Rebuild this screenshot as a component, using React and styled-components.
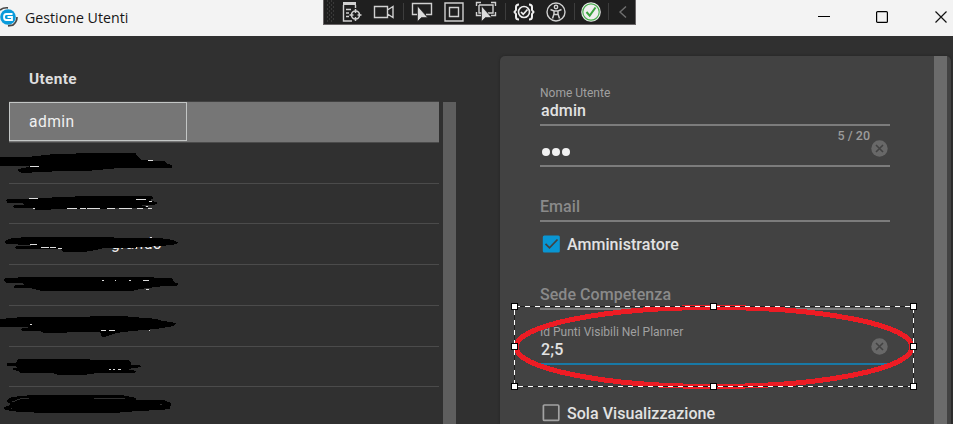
import React from 'react';
import styled, { createGlobalStyle } from 'styled-components';

const GlobalStyle = createGlobalStyle`
  * { box-sizing: border-box; }
  body { margin: 0; overflow: hidden; background: #303030; }
  svg { display: block; flex: none; }
`;

const Window = styled.div`
  position: relative;
  width: 953px;
  height: 424px;
  overflow: hidden;
  display: flex;
  flex-direction: column;
  background: #303030;
  font-family: Roboto, "Liberation Sans", sans-serif;
`;

const TitleBar = styled.header`
  flex: none;
  height: 36px;
  display: flex;
  align-items: flex-start;
  justify-content: space-between;
  background: #f3f3f3;
`;

const Brand = styled.div`
  width: 323px;
  height: 34px;
  display: flex;
  align-items: center;
  gap: 7px;
`;

const Title = styled.h1`
  margin: 2px 0 0;
  font: 400 14.2px/20px "Open Sans", "Noto Sans", sans-serif;
  color: #161616;
`;

const DebugBar = styled.div`
  width: 313px;
  height: 25px;
  display: flex;
  background: #1f1f1f;
  border: solid #686466;
  border-width: 0 1px 1px;
`;

const Cell = styled.div`
  width: ${(p) => p.$w || 32}px;
  height: 24px;
  display: flex;
  align-items: center;
  justify-content: center;
`;

const Divider = styled.div`
  width: 1px;
  height: 17px;
  margin: 3px 2px 0 3px;
  background: #3d3d3d;
`;

const Controls = styled.div`
  width: 317px;
  height: 34px;
  padding-right: 6px;
  display: flex;
  align-items: center;
  justify-content: flex-end;
  gap: 46px;
`;

const MaximizeIcon = styled.svg`
  margin-right: 1px;
`;

const Body = styled.main`
  flex: 1;
  min-height: 0;
  display: flex;
`;

const UserList = styled.section`
  width: 430px;
  margin-left: 9px;
`;

const ListHeader = styled.div`
  height: 66px;
  padding: 33px 20px 0;
  border-bottom: 1px solid #414141;
  font-size: 15.4px;
  line-height: 20px;
  letter-spacing: 0.35px;
  font-weight: 700;
  color: #dedede;
`;

const UserRow = styled.div`
  height: 40.75px;
  border-bottom: 1px solid #4b4b4b;
  background: ${(p) => (p.$selected ? '#767676' : 'transparent')};
`;

const UserCell = styled.div`
  width: 178px;
  height: 39px;
  padding-left: ${(p) => p.$indent || 20}px;
  line-height: 40px;
  font-size: 15.6px;
  letter-spacing: 0.45px;
  color: #f0f0f0;
  border: ${(p) => (p.$selected ? '1px solid #c3c6c5' : '0')};
  ${(p) => p.$selected && 'padding-left: 19px; line-height: 39px;'}
`;

const ScrollThumb = styled.div`
  width: 13px;
  margin: ${(p) => p.$margin};
  background: ${(p) => p.$color};
`;

const Card = styled.section`
  width: 451px;
  margin: 20px 0 0 44px;
  display: flex;
  justify-content: space-between;
  background: #424242;
  border-radius: 5px 5px 0 0;
  box-shadow: 0 0 3px #222;
`;

const Form = styled.form`
  width: 350px;
  margin-left: 40px;
  padding-top: 29px;
`;

const Field = styled.div`
  height: ${(p) => p.$h}px;
  display: flex;
  flex-direction: column;
  justify-content: flex-end;
  border-bottom: 2px solid ${(p) => p.$line || '#7c7c7c'};
`;

const Label = styled.label`
  font-size: 12px;
  line-height: 16px;
  font-weight: 400;
  color: #a0a0a0;
`;

const FieldRow = styled.div`
  height: ${(p) => p.$h || 22}px;
  display: flex;
  align-items: flex-start;
  justify-content: space-between;
`;

const Value = styled.span`
  padding-left: 1px;
  font-size: 16px;
  line-height: 20px;
  font-weight: 500;
  letter-spacing: 0.1px;
  color: #e3e3e3;
`;

const Placeholder = styled.span`
  font-size: 16px;
  line-height: 20px;
  font-weight: 500;
  letter-spacing: 0.05px;
  color: #8a8a8a;
  padding-bottom: 3px;
`;

const PasswordDots = styled.svg`
  margin-top: 8px;
`;

const Adornment = styled.div`
  display: flex;
  gap: 1px;
  margin-right: 2px;
`;

const Counter = styled.span`
  margin-top: 1px;
  font-size: 12.5px;
  line-height: 16px;
  font-weight: 500;
  color: #9c9c9c;
`;

const ClearIcon = styled.svg`
  margin-top: ${(p) => p.$drop}px;
`;

const Check = styled.label`
  display: flex;
  align-items: center;
  height: 20px;
  margin-top: ${(p) => p.$top}px;
  padding-left: 2px;
  gap: 6px;
  font-size: 16px;
  font-weight: 500;
  letter-spacing: 0.05px;
  color: #e2e2e2;
`;

const Annotations = styled.svg`
  position: absolute;
  inset: 0;
  pointer-events: none;
`;

const Logo = () => (
  <svg width="18" height="24" viewBox="0 0 18 24">
    <circle cx="8" cy="12" r="7.8" fill="#0a9bdb" />
    <path d="M0 5.2Q3 2.3 8 2.8M17 12Q17 17 12.7 20.2L8 20.8" fill="none" stroke="#484848" strokeWidth="1.7" />
    <path d="M12.5 9H6.3Q4 9 4 12T6.3 15H12V12H7.5" fill="none" stroke="#fff" strokeWidth="1.8" />
  </svg>
);

const Svg = ({ children, w = 22 }) => (
  <svg width={w} height="24" viewBox={`0 0 ${w} 24`} fill="none" stroke="#d0d0d0" strokeWidth="1.4">{children}</svg>
);

const Arrow = () => <path d="M6.5 6V21.5L10.4 17.6H16.6Z" fill="#dcdcdc" stroke="#1f1f1f" strokeWidth=".6" />;

const Grip = () => (
  <Svg w={8}>
    {[1, 3, 5, 7, 9, 11, 13, 15, 17, 19, 21].map((y, i) => (
      <path key={y} d={i % 2 ? `M3 ${y}h1M7 ${y}h1` : `M1 ${y}h1M5 ${y}h1`} stroke="#555" strokeWidth="1" />
    ))}
  </Svg>
);

const Clear = ({ drop }) => (
  <ClearIcon $drop={drop} width="17" height="17" viewBox="0 0 17 17">
    <circle cx="8.5" cy="8.5" r="8.2" fill="#686868" />
    <path d="M5 5L12 12M12 5L5 12" stroke="#424242" strokeWidth="1.6" />
  </ClearIcon>
);

const Box = ({ checked }) => (
  <svg width="19" height="19" viewBox="0 0 19 19">
    {checked ? (
      <>
        <rect x=".8" y=".5" width="17" height="17" rx="1.5" fill="#0996d3" />
        <path d="M3.5 8.8L7.5 12.8L15.5 4.5" fill="none" stroke="#424242" strokeWidth="1.8" />
      </>
    ) : (
      <rect x="1.4" y="1" width="15.4" height="15.4" rx="1" fill="none" stroke="#a3a3a3" strokeWidth="1.7" />
    )}
  </svg>
);

const scribbles = [
  'M0 157H28L54 154L98 153V153H136L137 156L142 160L164 161L168 164L172 165V168H120L86 171L62 171L22 173Q16 171 18 169L28 167L30 166H0Z',
  'M7 199L30 199L38 198L66 197L84 196H151L154 198L150 200L158 203L154 205H140L150 208L68 209H52L50 210H36L33 208H15Q11 206 15 205H24L23 203H8Q5 201 7 199Z',
  'M5 241L12 238L30 237H110L118 238H160L173 240L179 243L172 245L160 246L128 248H104L96 250L84 252H63L61 249H17Q13 247 17 246H32L29 245L6 244Z',
  'M5 278L30 277H154V278H172L174 282L179 284L176 286H164L140 289L132 291H42L30 288H15Q12 286 16 285H25L22 283H7Q2 281 5 278Z',
  'M0 319L22 317H82L97 316H124L132 317L158 319V320L176 323L174 326L156 329L132 331L116 333L104 337Q99 336 101 334L100 332H74L60 333H44L40 331H24Q19 330 23 328H28L27 327H0Z',
  'M7 363H16L18 359H90V360H128L131 363V365L140 365L141 367L127 369L136 371L134 373H97L83 375H58L52 373H20L18 371L13 370V368H18L15 366H7Z',
  'M8 399L12 397L32 395H122L136 398V400H164L171 403L170 409L160 410L138 411L114 413H48L20 412L5 410Q2 407 8 406L11 404L7 402Z',
];

const specks = 'M30 166.5h9M148 160.5h5M29 198.5h9M136 199.5h10M149 201.5h3M33 208.5h2M67 208.5h10M80 208.5h6M87 208.5h13M107 208.5h8M119 208.5h13M137 208.5h6M146 206.5h2M148 208.5h4M30 244.5h7M41 247.5h8M50 247.5h6M58 248.5h4M150 237.5h2M102 280.5h2M115 280.5h1M129 280.5h2M143 280.5h6M146 289.5h3M30 324.5h2M101 330.5h5M109 330.5h6M149 330.5h1M109 369h2M113 369h2M118 369h3';

const handles = [[514, 307], [714, 307], [914, 307], [514, 347], [914, 347], [514, 387], [714, 387], [914, 387]];

const rows = ['', '', 'grando', '', '', '', ''];

export default function App() {
  return (
    <Window>
      <GlobalStyle />
      <TitleBar>
        <Brand><Logo /><Title>Gestione Utenti</Title></Brand>
        <DebugBar>
          <Cell $w={12}><Grip /></Cell>
          <Cell>
            <Svg>
              <path d="M2 3.5H15" strokeWidth="3" />
              <path d="M2.5 5V21H11M14.5 5V8M5 9.5H10M5 13H8M5 16.5H8" />
              <circle cx="14.5" cy="15" r="4" strokeWidth="1.6" />
              <path d="M14.5 9v4M14.5 17v4M8.5 15h4M16.5 15h4" strokeWidth="1.5" />
            </Svg>
          </Cell>
          <Cell><Svg><path d="M1.5 6.5H14.5V17.5H1.5ZM14.5 10L20 6.5V17.5L14.5 14" /></Svg></Cell>
          <Divider />
          <Cell><Svg><path d="M6 14.5H1.5V3.5H20.5V14.5H15" /><Arrow /></Svg></Cell>
          <Cell><Svg><path d="M2 3H20V21H2ZM6.5 7.5H15.5V16.5H6.5Z" /></Svg></Cell>
          <Cell><Svg><path d="M1.5 6V2.5H6M16 2.5H20.5V6M20.5 12V15.5H16M1.5 12V15.5H6M4 5H18V13H13M4 5V13H7" /><Arrow /></Svg></Cell>
          <Divider />
          <Cell>
            <Svg>
              <path d="M6 4.5Q3 4.5 3 7V10L1.5 12L3 14V17Q3 19.5 6 19.5M16 4.5Q19 4.5 19 7V10L20.5 12L19 14V17Q19 19.5 16 19.5" strokeWidth="2" stroke="#eee" />
              <circle cx="11" cy="12" r="5.5" stroke="#eee" strokeWidth="1.6" />
              <path d="M8 12L10.2 14.2L14.5 9.5" stroke="#eee" strokeWidth="1.7" />
            </Svg>
          </Cell>
          <Cell $w={31}>
            <Svg>
              <circle cx="11" cy="12" r="9" />
              <circle cx="11" cy="7" r="1.7" />
              <path d="M5.5 9.5L9 11H13L16.5 9.5M9 11V14L7.5 18.5M13 11V14L14.5 18.5M9.5 14.5H12.5" strokeWidth="1.5" />
            </Svg>
          </Cell>
          <Divider />
          <Cell $w={28}>
            <Svg>
              <circle cx="11" cy="12" r="9.8" fill="#eee" stroke="none" />
              <circle cx="11" cy="12" r="8.2" stroke="#4bae50" strokeWidth="1.2" />
              <path d="M6.5 12L9.7 15.6L15.5 7.5" stroke="#39a33d" strokeWidth="2" />
            </Svg>
          </Cell>
          <Divider />
          <Cell $w={23}><Svg w={12}><path d="M9 6.5L3 12L9 17.5" stroke="#707070" /></Svg></Cell>
        </DebugBar>
        <Controls>
          <svg width="12" height="12"><path d="M0 5.5H12" stroke="#000" /></svg>
          <MaximizeIcon width="12" height="12"><rect x=".6" y=".6" width="10.8" height="10.8" rx="1" fill="none" stroke="#000" strokeWidth="1.2" /></MaximizeIcon>
          <svg width="12" height="12"><path d="M.5 .5L11.5 11.5M11.5 .5L.5 11.5" stroke="#111" strokeWidth="1.2" /></svg>
        </Controls>
      </TitleBar>
      <Body>
        <UserList>
          <ListHeader>Utente</ListHeader>
          <UserRow $selected><UserCell $selected>admin</UserCell></UserRow>
          {rows.map((name, i) => (
            <UserRow key={i}><UserCell $indent={name ? 102 : 20}>{name}</UserCell></UserRow>
          ))}
        </UserList>
        <ScrollThumb $margin="66px 0 0 4px" $color="#5e5e5e" />
        <Card>
          <Form>
            <Field $h={41}>
              <Label>Nome Utente</Label>
              <FieldRow $h={23}><Value>admin</Value></FieldRow>
            </Field>
            <Field $h={41}>
              <FieldRow $h={38}>
                <PasswordDots width="32" height="30"><g fill="#f2f2f2"><circle cx="6" cy="17" r="4" /><circle cx="16" cy="17" r="4" /><circle cx="26" cy="17" r="4" /></g></PasswordDots>
                <Adornment><Counter>5 / 20</Counter><Clear drop={13} /></Adornment>
              </FieldRow>
            </Field>
            <Field $h={55}><Placeholder>Email</Placeholder></Field>
            <Check $top={12}><Box checked />Amministratore</Check>
            <Field $h={56}><Placeholder>Sede Competenza</Placeholder></Field>
            <Field $h={55} $line="#1879a6">
              <Label>Id Punti Visibili Nel Planner</Label>
              <FieldRow $h={23}><Value>2;5</Value><Adornment><Clear drop={-2} /></Adornment></FieldRow>
            </Field>
            <Check $top={38}><Box />Sola Visualizzazione</Check>
          </Form>
          <ScrollThumb $margin="0 4px 0 0" $color="#6b6b6b" />
        </Card>
      </Body>
      <Annotations width="953" height="424" viewBox="0 0 953 424" shapeRendering="crispEdges">
        {scribbles.map((d) => <path key={d} d={d} fill="#000" />)}
        <path d={specks} stroke="#ddd" />
        <path d="M12 402L20 399L29 398M94 399L102 398H125M11 408h1M160 404h2" fill="none" stroke="#303030" />
        <ellipse cx="714" cy="347" rx="198" ry="39.5" fill="none" stroke="#ed1c24" strokeWidth="5" />
        <rect x="514.5" y="306.5" width="399" height="80" fill="none" stroke="#222" />
        <rect x="514.5" y="306.5" width="399" height="80" fill="none" stroke="#fff" strokeDasharray="5 5" />
        {handles.map(([x, y]) => <rect key={`${x}-${y}`} x={x - 2.5 - (x > 600 ? 1 : 0)} y={y - 3.5} width="6" height="6" fill="#fff" stroke="#000" />)}
      </Annotations>
    </Window>
  );
}
